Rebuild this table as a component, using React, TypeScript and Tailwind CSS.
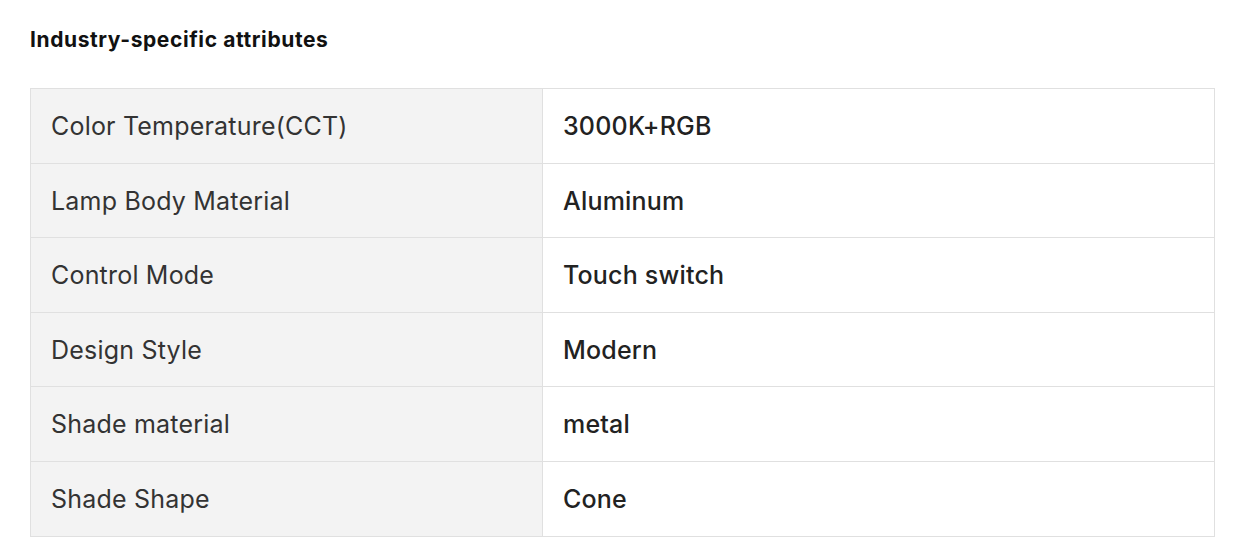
const rows = [
  ['Color Temperature(CCT)', '3000K+RGB'],
  ['Lamp Body Material', 'Aluminum'],
  ['Control Mode', 'Touch switch'],
  ['Design Style', 'Modern'],
  ['Shade material', 'metal'],
  ['Shade Shape', 'Cone'],
];

export default function App() {
  return (
    <div className="bg-white w-[1246px] h-[552px] px-[30px] pt-[26px] font-['Inter','Liberation_Sans',sans-serif]">
      <h2 className="text-[21px] leading-[28px] font-bold tracking-[0.6px] text-[#111]">Industry-specific attributes</h2>
      <table className="mt-[34px] w-[1185px] border-collapse">
        <tbody>
          {rows.map(([label, value]) => (
            <tr key={label} className="h-[74.6px]">
              <td className="w-[512px] border border-[#e0e0e0] bg-[#f3f3f3] pl-5 pt-[2px] text-[25px] tracking-[0.2px] text-[#333] align-middle">
                {label}
              </td>
              <td className="border border-[#e0e0e0] pl-5 pt-[2px] text-[25px] tracking-[0.2px] font-medium text-[#222] align-middle">
                {value}
              </td>
            </tr>
          ))}
        </tbody>
      </table>
    </div>
  );
}
